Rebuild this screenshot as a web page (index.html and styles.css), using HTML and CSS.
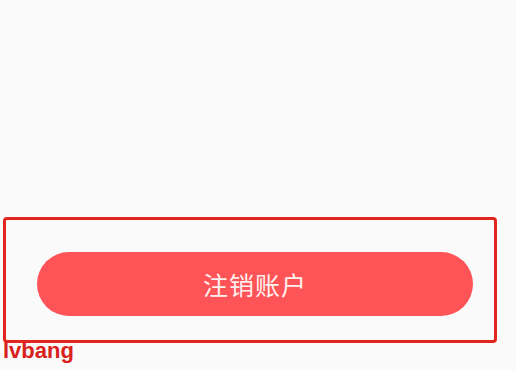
FILE: index.html
```html
<!DOCTYPE html>
<html lang="zh-CN">
<head>
  <meta charset="UTF-8">
  <title>注销账户</title>
  <meta name="viewport" content="width=device-width, initial-scale=1.0">
  <link rel="stylesheet" href="styles.css">
</head>
<body>

  <div class="page">
    <!-- zone vide au-dessus -->
    <div class="blank"></div>

    <div class="frame">
      <button class="cancel-btn">注销账户</button>
    </div>

    <div class="mark">lvbang</div>
  </div>

</body>
</html>
```

FILE: styles.css
```css
body {
  margin: 0;
  background-color: #fafafa;
  font-family: "Noto Sans CJK SC", "Noto Sans", sans-serif;
}

.page {
  width: 516px;
  height: 370px;
  overflow: hidden;
  padding-left: 3px;
  box-sizing: border-box;
}

.blank {
  height: 217px;
}

.frame {
  width: 494px;
  box-sizing: border-box;
  border: 3px solid #e2251f;
  border-radius: 4px;
  padding: 32px 21px 24px 31px;
}

.cancel-btn {
  display: block;
  width: 100%;
  height: 64px;
  border: none;
  border-radius: 32px;
  background-color: #ff5457;
  color: #fff0ee;
  font-family: "Noto Sans CJK SC", sans-serif;
  font-size: 25px;
  letter-spacing: 1px;
  padding: 0;
}

.mark {
  margin-top: -3px;
  font-family: "Liberation Sans", Arial, sans-serif;
  font-weight: bold;
  font-size: 22px;
  line-height: 22px;
  color: #d9211c;
}
```
